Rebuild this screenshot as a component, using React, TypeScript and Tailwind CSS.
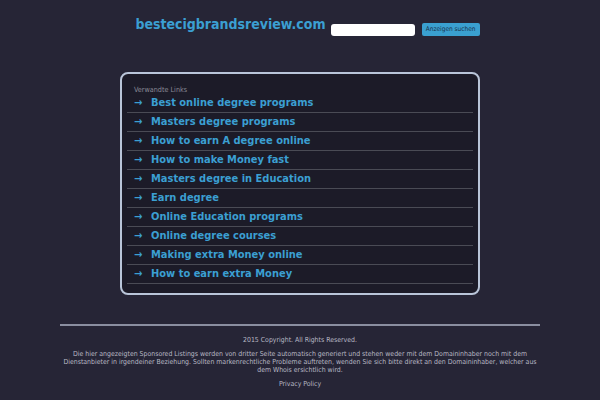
import React from 'react';

const links = [
  'Best online degree programs',
  'Masters degree programs',
  'How to earn A degree online',
  'How to make Money fast',
  'Masters degree in Education',
  'Earn degree',
  'Online Education programs',
  'Online degree courses',
  'Making extra Money online',
  'How to earn extra Money',
];

export default function App() {
  return (
    <div className="min-h-screen w-full bg-[#262536] font-['DejaVu_Sans_Condensed','DejaVu_Sans',sans-serif] [font-stretch:condensed]">
      {/* Header */}
      <div className="flex items-end justify-center pt-[12px] h-[37px] pl-[15px]">
        <span className="mb-[3px] text-[14px] font-bold text-[#3b9fd2] leading-[20px]">bestecigbrandsreview.com</span>
        <input className="ml-[5px] mb-[1px] w-[84px] h-[12px] rounded-[3px] bg-white border-0" />
        <button className="ml-[7px] mb-[1px] h-[13px] w-[58px] rounded-[2px] bg-[#3aa0d0] text-[6.5px] text-[#18304a] leading-[13px]">
          Anzeigen suchen
        </button>
      </div>

      {/* Links box */}
      <div className="mt-[35px] mx-auto w-[360px] h-[223px] rounded-[8px] border-2 border-[#b9c5d9] bg-[#1c1b28] px-[5px] pt-[11px]">
        <div className="pl-[7px] text-[7.2px] text-[#8a8a96] leading-[9px]">Verwandte Links</div>
        <ul>
          {links.map((l) => (
            <li key={l} className="flex items-center h-[19px] border-b border-[#4a4b55] pl-[7px] pt-[1px]">
              <span className="text-[11px] font-bold text-[#3b9fd2] w-[17px]">→</span>
              <span className="text-[11px] font-bold text-[#3b9fd2]">{l}</span>
            </li>
          ))}
        </ul>
      </div>

      {/* Footer */}
      <div className="mx-auto w-[480px] mt-[29px] border-t-2 border-[#8a8ea0] pt-[10px] text-center text-[6.9px] text-[#b8b8c4] leading-[8px]">
        <p>2015 Copyright. All Rights Reserved.</p>
        <p className="mt-[6px] -mx-[4px]">
          Die hier angezeigten Sponsored Listings werden von dritter Seite automatisch generiert und stehen weder mit dem Domaininhaber noch mit dem Dienstanbieter in irgendeiner Beziehung. Sollten markenrechtliche Probleme auftreten, wenden Sie sich bitte direkt an den Domaininhaber, welcher aus dem Whois ersichtlich wird.
        </p>
        <p className="mt-[6px]">Privacy Policy</p>
      </div>
    </div>
  );
}
